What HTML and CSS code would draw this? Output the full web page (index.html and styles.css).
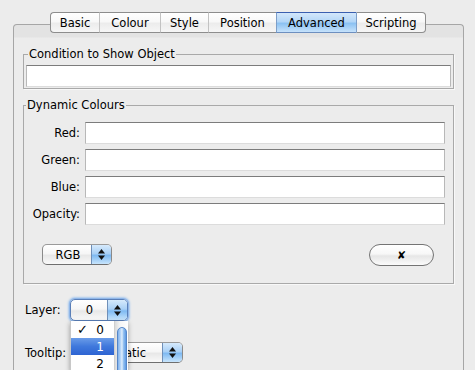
FILE: index.html
```html
<!DOCTYPE html>
<html>
<head>
<meta charset="utf-8">
<link rel="stylesheet" href="styles.css">
</head>
<body>
<div class="tabs">
  <div class="tab t-basic">Basic</div>
  <div class="tab t-colour">Colour</div>
  <div class="tab t-style">Style</div>
  <div class="tab t-position">Position</div>
  <div class="tab t-advanced active">Advanced</div>
  <div class="tab t-scripting">Scripting</div>
</div>
<div class="panel">
  <fieldset class="group cond">
    <legend>Condition to Show Object</legend>
    <div class="field"></div>
  </fieldset>
  <fieldset class="group dyn">
    <legend>Dynamic Colours</legend>
    <div class="grid">
      <label>Red:</label><div class="field"></div>
      <label>Green:</label><div class="field"></div>
      <label>Blue:</label><div class="field"></div>
      <label>Opacity:</label><div class="field"></div>
    </div>
    <div class="actions">
      <div class="popup rgb"><span class="val">RGB</span><span class="arrows"><svg width="7" height="11" viewBox="0 0 7 11"><polygon points="0,4.5 3.5,0 7,4.5" fill="#111"/><polygon points="0,6.5 3.5,11 7,6.5" fill="#111"/></svg></span></div>
      <div class="pill">&#x2718;</div>
    </div>
  </fieldset>
  <div class="row layer-row">
    <span class="lbl">Layer:</span>
    <div class="layer-wrap">
      <div class="popup layer focus"><span class="val">0</span><span class="arrows"><svg width="7" height="11" viewBox="0 0 7 11"><polygon points="0,4.5 3.5,0 7,4.5" fill="#111"/><polygon points="0,6.5 3.5,11 7,6.5" fill="#111"/></svg></span></div>
      <div class="menu">
        <div class="items">
          <div class="item"><span class="check">&#x2713;</span>0</div>
          <div class="item sel">1</div>
          <div class="item">2</div>
        </div>
        <div class="scroll"><div class="thumb"></div></div>
      </div>
    </div>
  </div>
  <div class="row tip-row">
    <span class="lbl">Tooltip:</span>
    <div class="popup tip"><span class="val">Automatic</span><span class="arrows"><svg width="7" height="11" viewBox="0 0 7 11"><polygon points="0,4.5 3.5,0 7,4.5" fill="#111"/><polygon points="0,6.5 3.5,11 7,6.5" fill="#111"/></svg></span></div>
  </div>
</div>
</body>
</html>
```

FILE: styles.css
```css
html, body {
  margin: 0;
  padding: 0;
  background: #ececec;
  overflow: hidden;
  height: 370px;
}
body {
  font-family: "DejaVu Sans", "Verdana", sans-serif;
  font-size: 11.5px;
  color: #000;
}
.tabs {
  display: flex;
  margin: 12px 0 -9px 50px;
  height: 21px;
  position: relative;
  z-index: 2;
}
.tab {
  box-sizing: border-box;
  height: 21px;
  display: flex;
  align-items: center;
  justify-content: center;
  border-top: 1px solid #8d8d8d;
  border-bottom: 1px solid #8d8d8d;
  border-left: 1px solid #c2c2c2;
  background: linear-gradient(#ffffff, #f8f8f8 45%, #ececec 55%, #f6f6f6);
  padding-top: 1px;
}
.t-basic { width: 49px; border-left: 1px solid #8d8d8d; border-radius: 4px 0 0 4px; }
.t-colour { width: 61px; }
.t-style { width: 48px; }
.t-position { width: 68px; }
.t-advanced { width: 80px; }
.t-scripting { width: 70px; border-right: 1px solid #8d8d8d; border-radius: 0 4px 4px 0; }
.tab.active {
  background: linear-gradient(#d3e7fb, #b3d6f7 45%, #8cc2f2 55%, #c6e2fb);
  border-top-color: #3a5fb0;
  border-bottom-color: #6d8fbf;
  border-left-color: #7d9ec8;
}
.tab.active + .tab { border-left-color: #7d9ec8; }
.panel {
  margin-left: 13px;
  width: 451px;
  box-sizing: border-box;
  height: 346px;
  border: 1px solid #a6a6a6;
  border-bottom: none;
  border-radius: 4px 4px 0 0;
  background: linear-gradient(#e3e3e3 0, #e3e3e3 12px, #ececec 13px);
  padding: 22px 9px 0 9px;
  position: relative;
  overflow: hidden;
}
.group {
  margin: 0;
  border: 1px solid #a9a9a9;
  box-shadow: 1px 1px 0 #f8f8f8;
  min-width: 0;
}
.group legend {
  padding: 0 1px;
  margin-left: 2px;
  line-height: 14px;
}
.field {
  box-sizing: border-box;
  height: 22px;
  background: #fff;
  border: 1px solid #b8b8b8;
  border-top-color: #7c7c7c;
  border-bottom-color: #dcdcdc;
}
.cond {
  padding: 4px 2px 1px 2px;
}
.dyn {
  margin-top: 9px;
  padding: 10px 8px 17px 0;
}
.grid {
  display: grid;
  grid-template-columns: 56px 1fr;
  column-gap: 5px;
  row-gap: 5px;
  align-items: center;
}
.grid label {
  text-align: right;
}
.actions {
  display: flex;
  justify-content: space-between;
  align-items: center;
  margin-top: 18px;
  padding: 0 11px 0 18px;
}
.popup {
  box-sizing: border-box;
  display: inline-flex;
  height: 21px;
  border: 1px solid #8a8a8a;
  border-top-color: #9a9a9a;
  border-bottom-color: #6f6f6f;
  border-radius: 5px;
  overflow: hidden;
  background: linear-gradient(#ffffff, #f6f6f6 45%, #e8e8e8 55%, #f9f9f9);
}
.popup .val {
  flex: 1;
  display: flex;
  align-items: center;
  justify-content: center;
}
.popup .arrows {
  width: 19px;
  display: flex;
  align-items: center;
  justify-content: center;
  border-left: 1px solid #6f8fb8;
  background: linear-gradient(#d6eafc, #a9d0f6 45%, #7fbaf2 55%, #c8e5fc);
}
.rgb { width: 70px; }
.rgb .val { padding-left: 2px; }
.pill {
  box-sizing: border-box;
  width: 65px;
  height: 22px;
  margin-top: 1px;
  border: 1px solid #747474;
  border-radius: 11px;
  background: linear-gradient(#ffffff, #f7f7f7 45%, #e6e6e6 55%, #fbfbfb);
  display: flex;
  align-items: center;
  justify-content: center;
  font-size: 11px;
  font-weight: bold;
}
.row {
  display: flex;
  align-items: center;
  padding-left: 2px;
}
.lbl {
  width: 45px;
}
.layer-row {
  margin-top: 15px;
}
.layer-wrap {
  position: relative;
  z-index: 3;
}
.layer {
  width: 58px;
  height: 22px;
}
.layer .val { padding-left: 1px; }
.focus {
  border-color: #5a7fb8;
  box-shadow: 0 0 0 1px #8fb6e8, 0 0 2px 2px #a7c8ee;
}
.tip-row {
  margin-top: 21px;
}
.tip {
  width: 113px;
}
.menu {
  position: absolute;
  left: 0;
  top: 22px;
  width: 58px;
  height: 50px;
  display: flex;
  background: #fff;
  box-shadow: 0 2px 5px rgba(0,0,0,0.35);
  border-left: 1px solid #c8c8c8;
  box-sizing: border-box;
  overflow: hidden;
}
.items {
  flex: 1;
  padding-top: 0;
}
.item {
  height: 17px;
  display: flex;
  align-items: center;
  justify-content: flex-end;
  padding-right: 10px;
  position: relative;
  font-size: 12px;
}
.item .check {
  position: absolute;
  left: 6px;
  font-size: 13px;
}
.item.sel {
  background: linear-gradient(#6a9ce8, #3f78dc 50%, #2e64d2);
  color: #fff;
}
.scroll {
  width: 13px;
  background: linear-gradient(90deg, #dadada, #f6f6f6 40%, #ffffff);
  border-left: 1px solid #cfcfcf;
  position: relative;
}
.thumb {
  margin: 6px 1px 0 2px;
  height: 60px;
  border-radius: 5px 5px 0 0;
  border: 1px solid #5586c8;
  background: linear-gradient(90deg, #7fb1ec, #bcd9f8 35%, #e4f0fc 50%, #9cc6f2 65%, #5d9ae4);
}
```
